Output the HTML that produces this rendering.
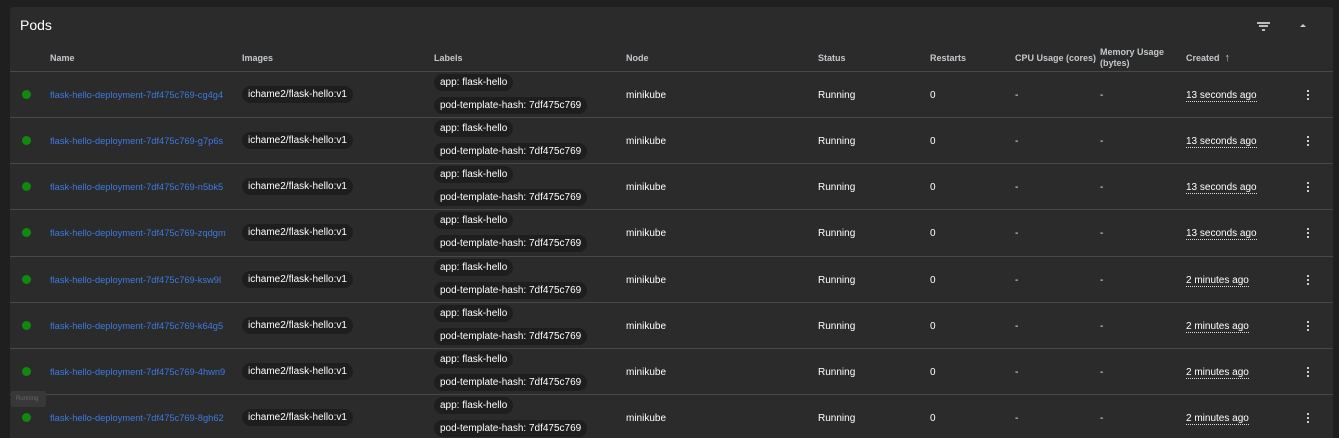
<!DOCTYPE html>
<html><head><meta charset="utf-8"><style>
*{margin:0;padding:0;box-sizing:border-box}
html,body{width:1339px;height:438px;overflow:hidden}
body{background:#1f1f1f;font-family:"Liberation Sans",sans-serif;position:relative}
.card{position:absolute;left:10px;top:7px;width:1323px;height:431px;background:#2b2b2b;border-radius:3px 3px 0 0}
.t{position:absolute;white-space:nowrap;font-size:10px;color:#fff}
.h{color:#c4c8cc;font-size:9px;font-weight:bold}
.line{position:absolute;left:10px;width:1323px;height:1px;background:#484848}
.chip{position:absolute;height:17px;line-height:17px;background:#1e1e1e;border-radius:9px;padding:0 6px;font-size:10px;color:#fff;white-space:nowrap}
.dot{position:absolute;left:22px;width:9px;height:9px;border-radius:50%;background:#0f8a0f}
.link{color:#3d7ae0;font-size:9.3px}
.ago{border-bottom:1px dotted #ddd}
.menu{position:absolute;left:1307px;width:2px;height:10px;background:
linear-gradient(#ccc 0 2px,transparent 2px 4px,#ccc 4px 6px,transparent 6px 8px,#ccc 8px 10px)}
</style></head><body>
<div class="card"></div>
<div class="t" style="left:20px;top:17px;font-size:14px">Pods</div>
<div style="position:absolute;left:1257px;top:22px;width:13px;height:1.5px;background:#bbb"></div>
<div style="position:absolute;left:1259px;top:25px;width:9px;height:1.5px;background:#bbb"></div>
<div style="position:absolute;left:1262px;top:29px;width:3px;height:1.5px;background:#bbb"></div>
<div style="position:absolute;left:1300px;top:24px;width:0;height:0;border-left:3.5px solid transparent;border-right:3.5px solid transparent;border-bottom:3px solid #ccc"></div>
<div class="t h" style="left:50px;top:53px">Name</div>
<div class="t h" style="left:242px;top:53px">Images</div>
<div class="t h" style="left:434px;top:53px">Labels</div>
<div class="t h" style="left:626px;top:53px">Node</div>
<div class="t h" style="left:818px;top:53px">Status</div>
<div class="t h" style="left:930px;top:53px">Restarts</div>
<div class="t h" style="left:1015px;top:53px">CPU Usage (cores)</div>
<div class="t h" style="left:1100px;top:47px;line-height:11px">Memory Usage<br>(bytes)</div>
<div class="t h" style="left:1186px;top:52px">Created&nbsp; <span style="font-size:11px;font-weight:normal">↑</span></div>
<div id="rows"></div>
<script>
var names=["cg4g4","g7p6s","n5bk5","zqdgm","ksw9l","k64g5","4hwn9","8gh62"];
var tops=[71,117,163,209,256,302,348,394];
var h="";
for(var i=0;i<8;i++){var T=tops[i];
h+='<div class="line" style="top:'+T+'px"></div>';
h+='<div class="dot" style="top:'+(T+19)+'px"></div>';
h+='<div class="t link" style="left:50px;top:'+(T+19)+'px">flask-hello-deployment-7df475c769-'+names[i]+'</div>';
h+='<div class="chip" style="left:242px;top:'+(T+15)+'px">ichame2/flask-hello:v1</div>';
h+='<div class="chip" style="left:434px;top:'+(T+3)+'px">app: flask-hello</div>';
h+='<div class="chip" style="left:434px;top:'+(T+26)+'px">pod-template-hash: 7df475c769</div>';
h+='<div class="t" style="left:626px;top:'+(T+19)+'px">minikube</div>';
h+='<div class="t" style="left:818px;top:'+(T+19)+'px">Running</div>';
h+='<div class="t" style="left:930px;top:'+(T+19)+'px">0</div>';
h+='<div class="t" style="left:1015px;top:'+(T+19)+'px">-</div>';
h+='<div class="t" style="left:1100px;top:'+(T+19)+'px">-</div>';
h+='<div class="t" style="left:1186px;top:'+(T+19)+'px"><span class="ago">'+(i<4?'13 seconds ago':'2 minutes ago')+'</span></div>';
h+='<div class="menu" style="top:'+(T+19)+'px"></div>';}
h+='<div style="position:absolute;left:11px;top:391px;width:35px;height:16px;background:#383838;border-radius:2px;color:#666;font-size:6px;line-height:16px;padding-left:5px">Running</div>';
document.getElementById("rows").innerHTML=h;
</script>
</body></html>
